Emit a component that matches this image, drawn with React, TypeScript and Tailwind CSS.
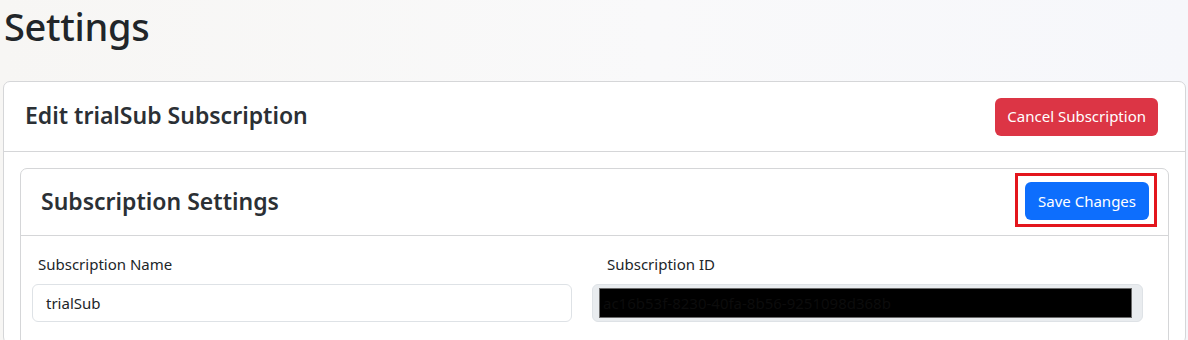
export default function App() {
  return (
    <div className="min-h-screen bg-[linear-gradient(90deg,#f7f6f4_0%,#f9f9fa_55%,#f6f7fb_100%)] text-[#212529] font-['Noto_Sans',sans-serif]">
      <h1 className="pl-[4px] pt-[2px] text-[38px] leading-[48px] font-medium tracking-[-0.3px]">Settings</h1>

      <div className="mt-[31px] ml-[3px] mr-[2px] rounded-[7px] border border-[#d5d6d8] bg-white">
        <div className="flex h-[70px] items-center justify-between border-b border-[#d5d6d8] pb-[3px] pl-[21px] pr-[27px]">
          <h4 className="text-[23px] font-semibold text-[#2b3035]">Edit trialSub Subscription</h4>
          <button className="mt-[3px] h-[38px] rounded-[6px] bg-[#dc3545] px-[12px] text-[15px] text-white">
            Cancel Subscription
          </button>
        </div>

        <div className="px-[16px] pt-[16px]">
          <div className="rounded-t-[7px] border border-[#d5d6d8] pb-[20px]">
            <div className="flex h-[67px] items-center justify-between border-b border-[#d5d6d8] pb-[2px] pl-[20px] pr-[19px]">
              <h3 className="text-[23px] font-semibold text-[#2b3035]">Subscription Settings</h3>
              <div className="relative">
                <span className="pointer-events-none absolute -left-[10px] -right-[8px] -top-[9px] -bottom-[7px] border-[3px] border-[#e3161d]" />
                <button className="h-[38px] rounded-[6px] bg-[#0d6efd] px-[13px] text-[15px] text-white">
                  Save Changes
                </button>
              </div>
            </div>

            <div className="grid grid-cols-[540px_551px] gap-x-[20px] pl-[11px] pt-[16px]">
              <div>
                <label className="block pl-[6px] text-[15px] leading-[24px]">Subscription Name</label>
                <div className="mt-[8px] flex h-[38px] items-center rounded-[6px] border border-[#dee2e6] bg-white px-[13px] text-[15px]">
                  trialSub
                </div>
              </div>
              <div>
                <label className="block pl-[15px] text-[15px] leading-[24px]">Subscription ID</label>
                <div className="mt-[8px] flex h-[38px] items-center rounded-[6px] border border-[#dee2e6] bg-[#e9ecef] pl-[6px] pr-[10px]">
                  <div className="flex h-[30px] flex-1 items-center border border-[#6b6b6b] bg-black pl-[3px] text-[15px] text-[#0c0c0c]">
                    ac16b53f-8230-40fa-8b56-9251098d368b
                  </div>
                </div>
              </div>
            </div>
          </div>
        </div>
      </div>
    </div>
  );
}
